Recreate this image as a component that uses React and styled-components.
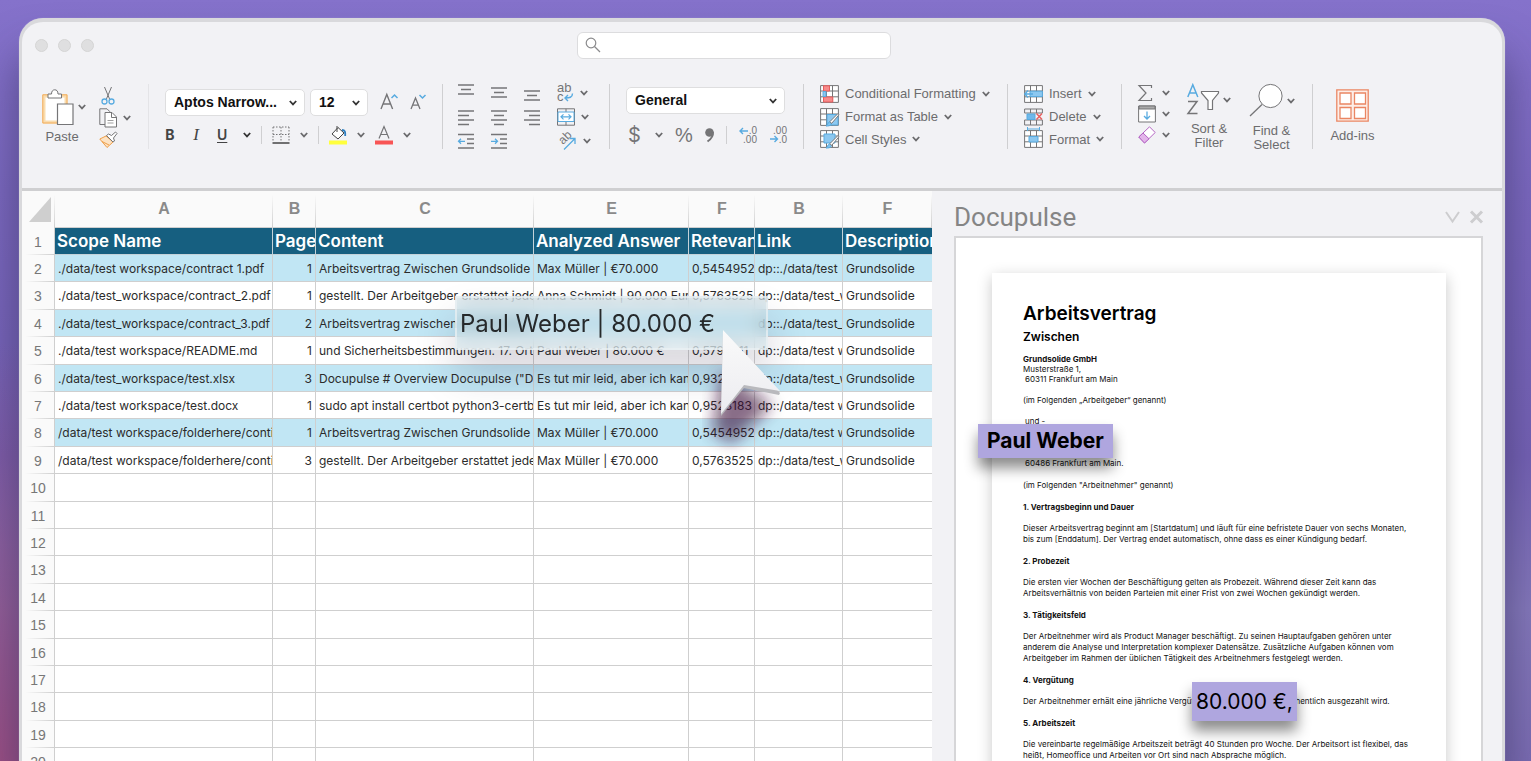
import React from "react";
import styled, { createGlobalStyle } from "styled-components";

const GlobalStyle = createGlobalStyle`
  * { box-sizing: border-box; }
  body { margin: 0; font-family: Inter, "Liberation Sans", sans-serif; color: #222; }
  button { border: 0; background: none; padding: 0; margin: 0; font: inherit; color: inherit; }
  h1, h2, h3, p { margin: 0; }
`;

/* ---------- window ---------- */

const Desktop = styled.div`
  height: 100vh;
  padding: 18px 26px 0 19px;
  display: flex;
  overflow: hidden;
  background:
    radial-gradient(ellipse 400px 420px at 0 100%, #9c4f84 0, rgba(140, 80, 145, 0) 100%),
    linear-gradient(180deg, #8572cb 0, #7b68bf 25%, #7461b4 60%, #8478ba 80%, #7b6cb2 100%);
`;

const Window = styled.main`
  flex: 1;
  min-width: 0;
  display: flex;
  flex-direction: column;
  overflow: hidden;
  background: #f2f2f5;
  border: 3px solid #d9d9dc;
  border-top-width: 4px;
  border-bottom: 0;
  border-radius: 24px 24px 0 0;
  box-shadow: 0 0 1px #b4a8e0, 0 36px 44px rgba(50, 45, 90, 0.6);
`;

const TitleBar = styled.header`
  flex: none;
  height: 46px;
  display: grid;
  grid-template-columns: 555fr 314px 611fr;
  align-items: center;
`;

const Lights = styled.div`
  display: flex;
  gap: 10px;
  padding-left: 13px;
`;

const Light = styled.button`
  width: 13px;
  height: 13px;
  border-radius: 50%;
  background: #dfdfe0;
  border: 1px solid #d4d4d4;
`;

const SearchBox = styled.label`
  display: flex;
  align-items: center;
  gap: 6px;
  height: 27px;
  padding: 0 7px;
  background: #fff;
  border: 1px solid #dcdcde;
  border-radius: 6px;
`;

const SearchInput = styled.input`
  flex: 1;
  min-width: 0;
  border: 0;
  outline: 0;
  background: none;
  font-size: 13px;
`;

/* ---------- ribbon ---------- */

const Ribbon = styled.section`
  flex: none;
  height: 123px;
  padding-top: 16px;
  display: flex;
  border-bottom: 3px solid #cfcfd1;
  font-family: "Liberation Sans", Arial, sans-serif;
  font-size: 13px;
  color: #6c6c6e;
`;

const Group = styled.div`
  flex: none;
  width: ${(p) => p.$width}px;
  height: 65px;
  padding-left: ${(p) => p.$pad || 16}px;
  display: flex;
  flex-direction: ${(p) => (p.$stack ? "column" : "row")};
  gap: ${(p) => p.$gap || 0}px;
  border-right: ${(p) => (p.$last ? 0 : 1)}px solid ${(p) => (p.$faint ? "#e4e4e7" : "#cfcfd1")};
`;

const ToolStack = styled.div`
  display: flex;
  flex-direction: column;
  gap: ${(p) => p.$gap || 3}px;
  padding-top: ${(p) => p.$top || 0}px;
`;

const ToolRow = styled.div`
  display: flex;
  align-items: center;
  height: ${(p) => p.$height || 20}px;
  gap: ${(p) => p.$gap || 10}px;
`;

const ToolButton = styled.button`
  display: flex;
  align-items: center;
  justify-content: flex-start;
  gap: ${(p) => p.$gap || 6}px;
  height: ${(p) => p.$height || 20}px;
  white-space: nowrap;
`;

const GlyphButton = styled.button`
  width: ${(p) => p.$width || 10}px;
  text-align: center;
  line-height: 20px;
  font-size: ${(p) => p.$size || 14}px;
  font-family: ${(p) => p.$font || "Inter"}, sans-serif;
  font-weight: ${(p) => p.$weight || 400};
  font-style: ${(p) => (p.$italic ? "italic" : "normal")};
  text-decoration: ${(p) => (p.$underline ? "underline" : "none")};
  text-underline-offset: 2px;
  color: ${(p) => p.$color || "#444"};
`;

const BigButton = styled.button`
  display: flex;
  flex-direction: column;
  align-items: center;
  width: ${(p) => p.$width}px;
  padding-top: ${(p) => p.$top || 0}px;
  line-height: 14px;
`;

const BigIcon = styled.span`
  display: flex;
  align-items: center;
  gap: 4px;
  align-self: stretch;
  justify-content: ${(p) => p.$align || "flex-end"};
  margin-bottom: ${(p) => p.$below || 5}px;
`;

const Rule = styled.span`
  width: 1px;
  height: 18px;
  background: #cfcfd1;
`;

const SelectBox = styled.div`
  position: relative;
  width: ${(p) => p.$width}px;
  svg {
    position: absolute;
    right: 8px;
    top: 11px;
    pointer-events: none;
  }
`;

const Select = styled.select`
  appearance: none;
  width: 100%;
  height: 27px;
  padding: 0 20px 0 8px;
  background: #fff;
  border: 1px solid #dededf;
  border-radius: 5px;
  font: bold 14px "Liberation Sans", Arial, sans-serif;
  color: #111;
`;

const AlignGrid = styled.div`
  display: grid;
  grid-template-columns: repeat(3, 16px) auto;
  grid-auto-rows: 18px;
  gap: 6px 17px;
  align-items: center;
`;

const Svg = styled.svg`
  flex: none;
  display: block;
  overflow: visible;
`;

const Icon = ({ w = 18, h = 18, children, color = "#757577", width = 1 }) => (
  <Svg width={w} height={h} viewBox={`0 0 ${w} ${h}`} fill="none" stroke={color} strokeWidth={width} aria-hidden="true">
    {children}
  </Svg>
);

const Chevron = ({ dark }) => (
  <Icon w={8} h={6} color={dark ? "#333" : "#6b6b6d"} width={1.8}>
    <path d="M.8 1 4 4.400 7.200 1" />
  </Icon>
);

const BLUE = "#58abe0";

const Lines = ({ rows, y = 0, gap = 4.5 }) => (
  <Icon w={16} h={18} width={1.3}>
    {rows.map(([a, b], i) => (
      <path key={i} d={`M${a} ${y + 1 + i * gap}H${b}`} />
    ))}
  </Icon>
);

const PasteIcon = () => (
  <Icon w={32} h={36}>
    <path d="M2 7H24V33H2z" fill="#fff" stroke="#f9dcae" strokeWidth="3" />
    <path d="M.8 5.800H25V34H.8z" stroke="#f2ab57" strokeWidth="1" />
    <path d="M6 9V5h3.500C9.500 2 11 .8 12.800 .8S16 2 16 5h3.500v4z" fill="#fff" />
    <path d="M15.500 15H31V35.500H15.500z" fill="#fff" strokeWidth="1.200" />
  </Icon>
);

const CutIcon = () => (
  <Icon w={18} h={20}>
    <path d="M5.500 1 11 14M12.500 1 7 14" />
    <circle cx="5.500" cy="15.500" r="2.500" stroke={BLUE} strokeWidth="1.300" />
    <circle cx="12.500" cy="15.500" r="2.500" stroke={BLUE} strokeWidth="1.300" />
  </Icon>
);

const CopyIcon = () => (
  <Icon w={18} h={20}>
    <path d="M6 16.500H.8V.8H8l3 3" />
    <path d="M6 4.500h7l4.500 4.500v10H6z" fill="#fff" />
    <path d="M12.500 4.500v5h5" />
    <path d="M8.500 12.500h6M8.500 15h6" strokeWidth=".7" />
  </Icon>
);

const BrushIcon = () => (
  <Icon w={18} h={18}>
    <path d="M.8 8 7 5l7 6-6 5.500z" fill="#fde3c4" stroke="#ee9f4a" />
    <path d="M3 10.500 10 14" stroke="#ee9f4a" />
    <path d="M7.500 4.500 9.500 3l3 1.500 4-3.500 1.500 1.500L14.500 7l1 3L14 11z" fill="#fff" />
  </Icon>
);

const FontSize = ({ up }) => (
  <Icon w={18} h={20}>
    {up ? <path d="M1 17 6.800 2.500 12.600 17M3 12h7.600" strokeWidth="1.400" /> : <path d="M1 17 5.500 6 10 17M2.500 13.200h6" strokeWidth="1.300" />}
    {up ? <path d="M11.500 6 14.500 3l3 3" stroke={BLUE} strokeWidth="1.500" /> : <path d="M9.500 3 12.500 6l3-3" stroke={BLUE} strokeWidth="1.500" />}
  </Icon>
);

const BordersIcon = () => (
  <Icon>
    <path d="M1 1H17M1 1V16M17 1V16M9 1V16M1 8.500H17" strokeDasharray="1.500 1.500" />
    <path d="M.5 17H17.500" stroke="#444" strokeWidth="1.600" />
  </Icon>
);

const FillIcon = () => (
  <Icon h={20}>
    <path d="M3 9 9 2.500 15 8l-6 6z" fill="#fff" stroke="#444" />
    <path d="M8 1v6" stroke="#444" />
    <path d="M13 5c3 0 3.500 2 3.200 6" stroke="#2f7fc0" strokeWidth="1.800" />
    <path d="M0 15.500H18V19.500H0z" fill="#ffff3c" stroke="none" />
  </Icon>
);

const FontColorIcon = () => (
  <Icon h={20}>
    <path d="M4 13.500 9 1.500 14 13.500M5.700 9.500h6.600" strokeWidth="1.200" />
    <path d="M0 15.500H18V19.500H0z" fill="#f85555" stroke="none" />
  </Icon>
);

const WrapIcon = () => (
  <Icon>
    <text x="0" y="8" fontSize="13" fill="#757577" stroke="none">ab</text>
    <text x="0" y="17" fontSize="13" fill="#757577" stroke="none">c</text>
    <path d="M15.500 9.500c0 4-3 4.500-7.500 4.500M11 11l-3 3 3 3" stroke={BLUE} strokeWidth="1.400" />
  </Icon>
);

const MergeIcon = () => (
  <Icon>
    <path d="M.5 .8H17.500V17.200H.5zM9 .8V4M9 14V17.200" />
    <path d="M1 4H17V13.500H1z" fill="#fff" stroke={BLUE} />
    <path d="M4 8.800H14M6.500 6.300 4 8.800l2.500 2.500M11.500 6.300 14 8.800l-2.500 2.500" stroke={BLUE} strokeWidth="1.200" />
  </Icon>
);

const OrientIcon = () => (
  <Icon>
    <text x="0" y="0" fontSize="12" fill="#757577" stroke="none" transform="translate(6 13) rotate(-45)">ab</text>
    <path d="M7 17.500 18 6.500M12.500 6.500H18V12" stroke={BLUE} strokeWidth="1.300" />
  </Icon>
);

const IndentIcon = ({ right }) => (
  <Icon w={16}>
    <path d="M0 2.500H16M9 7H16M9 11.500H16M0 16H16" strokeWidth="1.300" />
    <path d={right ? "M0 9.300H6.500M4 6.800 6.500 9.300 4 11.800" : "M7 9.300H.5M3 6.800 .5 9.300 3 11.800"} stroke={BLUE} strokeWidth="1.300" />
  </Icon>
);

const DecimalIcon = ({ more }) => (
  <Icon>
    <text x="18" y="8" textAnchor="end" fontSize="10" fill="#757577" stroke="none">{more ? ".00" : ".0"}</text>
    <text x="18" y="17" textAnchor="end" fontSize="10" fill="#757577" stroke="none">{more ? ".0" : ".00"}</text>
    <path d={more ? "M1 13H8.500M5.500 10 8.500 13l-3 3" : "M9 5H1M4 2 1 5l3 3"} stroke={BLUE} strokeWidth="1.400" />
  </Icon>
);

const CommaIcon = () => (
  <Icon w={9} h={16}>
    <circle cx="4.500" cy="5.500" r="4.300" fill="#757577" stroke="none" />
    <path d="M7.800 5c.6 4-1.600 7-5.300 9.500" strokeWidth="2" />
  </Icon>
);

const CellGrid = ({ children }) => (
  <Icon w={19}>
    <path d="M.6 .6H18.400V17.400H.6z" fill="#fff" />
    <path d="M6.500 .6V17.400M12.500 .6V17.400M.6 6H18.400M.6 11.800H18.400" />
    {children}
  </Icon>
);

const Pen = () => (
  <g>
    <path d="M6 18c2-1 1-3 3.500-4l2 2C10.500 18 8 18 6 18z" fill="#7cc3ee" stroke={BLUE} />
    <path d="M10 13.500 18 5.500c1 0 1 1.500 0 2.500l-6.500 7.500z" fill="#fff" />
  </g>
);

const ConditionalIcon = () => (
  <CellGrid>
    <path d="M3.500 .8H9.500V6H3.500zM3.500 12H12.800V17H3.500z" fill="#f78b8b" stroke="#e85d5d" />
    <path d="M3 6.500H6V11.500H3z" fill="#8cc8f0" stroke={BLUE} />
  </CellGrid>
);

const TableFormatIcon = () => (
  <CellGrid>
    <path d="M7 6.500H18V17H7z" fill="#8cc8f0" stroke={BLUE} />
    <Pen />
  </CellGrid>
);

const CellStyleIcon = () => (
  <CellGrid>
    <path d="M4 4H15V13H4z" fill="#8cc8f0" stroke={BLUE} />
    <Pen />
  </CellGrid>
);

const InsertIcon = () => (
  <CellGrid>
    <path d="M6 6.200H18.400V11.600H6z" fill="#8cc8f0" stroke={BLUE} />
    <path d="M9 9H1M4 5.500 .8 9 4 12.500" stroke={BLUE} strokeWidth="1.400" />
  </CellGrid>
);

const DeleteIcon = () => (
  <Icon w={19}>
    <path d="M.6 5V1H18.400V5M6.500 1V5M12.500 1V5M.6 12V17H18.400V12M6.500 12V17M12.500 12V17M.6 5H18.400M.6 12H18.400" />
    <path d="M3 6H11V11.500H3z" fill="#6fb8ea" stroke={BLUE} />
    <path d="M12.500 5.500 18 11.500M18 5.500 12.500 11.500" stroke="#e85d5d" strokeWidth="1.400" />
  </Icon>
);

const FormatIcon = () => (
  <CellGrid>
    <path d="M5 6.500H14V12H5z" fill="#8cc8f0" stroke={BLUE} />
    <path d="M3.500 -1H15.500M3.500 -3V1M15.500 -3V1" stroke={BLUE} />
  </CellGrid>
);

const SumIcon = () => (
  <Icon>
    <path d="M13.500 4V1.500H1L8 9 1 16.500H13.500V14" strokeWidth="1.200" />
  </Icon>
);

const FillDownIcon = () => (
  <Icon>
    <path d="M.6 1H17.400V17H.6z" fill="#fff" />
    <path d="M1 1H17V4H1z" fill="#aaa" />
    <path d="M9 6.500V14M6 11l3 3 3-3" stroke={BLUE} strokeWidth="1.300" />
  </Icon>
);

const ClearIcon = () => (
  <Icon color="#b566c4">
    <path d="M.8 11 11.500 .8 17.200 6.500 6.500 17z" fill="#fff" />
    <path d="M.8 11 5 7l6 5.800L6.500 17z" fill="#e3b5ea" />
  </Icon>
);

const SortIcon = () => (
  <Icon w={32} h={31}>
    <path d="M.8 13 5.800 .8 10.800 13M2.500 9h6.600" stroke={BLUE} strokeWidth="1.500" />
    <path d="M1 17.500H10L1 29.500H10.500" strokeWidth="1.500" />
    <path d="M14.500 7.500H31.500V9L25.500 16.500V25.500H21V16.500L14.500 9z" fill="#fff" strokeWidth="1.200" />
  </Icon>
);

const FindIcon = () => (
  <Icon w={34} h={33}>
    <circle cx="21.500" cy="12" r="11.600" fill="#fff" />
    <path d="M13 20.500 1 32" strokeWidth="1.300" />
  </Icon>
);

const AddinsIcon = () => (
  <Icon w={33} h={33} color="#ea8663" width={1.3}>
    <path d="M.8 .8H32.200V32.200H.8z" fill="#fdeee8" />
    <path d="M4 4H15V15H4zM18.500 4H29.500V15H18.500zM4 18.500H15V29.500H4zM18.500 18.500H29.500V29.500H18.500z" fill="#fff" />
  </Icon>
);

const Labelled = ({ icon, text }) => (
  <ToolButton>
    {icon}
    {text}
    <Chevron />
  </ToolButton>
);

const Dropdown = ({ label, value, width }) => (
  <SelectBox $width={width}>
    <Select aria-label={label} defaultValue={value}>
      <option>{value}</option>
    </Select>
    <Chevron dark />
  </SelectBox>
);

const IconButton = ({ label, children, chevron, gap }) => (
  <ToolButton aria-label={label} $gap={gap} $height={18}>
    {children}
    {chevron && <Chevron />}
  </ToolButton>
);

const FULL = [0, 16];

function RibbonBar() {
  return (
    <Ribbon aria-label="Home">
      <Group $width={127} $gap={13} $faint>
        <BigButton $width={48} $top={5}>
          <BigIcon>
            <PasteIcon />
            <Chevron />
          </BigIcon>
          Paste
        </BigButton>
        <ToolStack $gap={4} $top={3}>
          <IconButton label="Cut"><CutIcon /></IconButton>
          <IconButton label="Copy" chevron><CopyIcon /></IconButton>
          <IconButton label="Format painter"><BrushIcon /></IconButton>
        </ToolStack>
      </Group>

      <Group $width={294} $stack $gap={5}>
        <ToolRow $height={36} $gap={12}>
          <ToolRow $gap={5}>
            <Dropdown label="Font" value="Aptos Narrow..." width={140} />
            <Dropdown label="Font size" value="12" width={58} />
          </ToolRow>
          <IconButton label="Increase font size"><FontSize up /></IconButton>
          <IconButton label="Decrease font size"><FontSize /></IconButton>
        </ToolRow>
        <ToolRow>
          <ToolRow $gap={16}>
            <GlyphButton $weight={700}>B</GlyphButton>
            <GlyphButton $font="Liberation Serif" $size={17} $italic>I</GlyphButton>
            <GlyphButton $weight={600} $underline>U</GlyphButton>
            <Chevron dark />
          </ToolRow>
          <Rule />
          <IconButton label="Borders" chevron gap={10}><BordersIcon /></IconButton>
          <Rule />
          <IconButton label="Fill color" chevron gap={10}><FillIcon /></IconButton>
          <IconButton label="Font color" chevron gap={10}><FontColorIcon /></IconButton>
        </ToolRow>
      </Group>

      <Group $width={167} $pad={15}>
        <AlignGrid>
          <IconButton label="Top align"><Lines rows={[FULL, [3, 13], FULL]} /></IconButton>
          <IconButton label="Middle align"><Lines rows={[FULL, [3, 13], FULL]} y={3} /></IconButton>
          <IconButton label="Bottom align"><Lines rows={[FULL, [3, 13], FULL]} y={6} /></IconButton>
          <IconButton label="Wrap text" chevron gap={5}><WrapIcon /></IconButton>
          <IconButton label="Align left"><Lines rows={[FULL, [0, 11], FULL, [0, 11]]} y={2} /></IconButton>
          <IconButton label="Center"><Lines rows={[FULL, [3, 13], FULL, [3, 13]]} y={2} /></IconButton>
          <IconButton label="Align right"><Lines rows={[FULL, [5, 16], FULL, [5, 16]]} y={2} /></IconButton>
          <IconButton label="Merge" chevron><MergeIcon /></IconButton>
          <IconButton label="Decrease indent"><IndentIcon /></IconButton>
          <IconButton label="Increase indent"><IndentIcon right /></IconButton>
          <span />
          <IconButton label="Orientation" chevron gap={8}><OrientIcon /></IconButton>
        </AlignGrid>
      </Group>

      <Group $width={194} $stack $gap={9}>
        <ToolRow $height={32}>
          <Dropdown label="Number format" value="General" width={159} />
        </ToolRow>
        <ToolRow $gap={12}>
          <GlyphButton $width={17} $size={20} $color="#757577">$</GlyphButton>
          <Chevron />
          <GlyphButton $width={18} $size={20} $color="#757577" $font="Liberation Sans">%</GlyphButton>
          <IconButton label="Comma style"><CommaIcon /></IconButton>
          <Rule />
          <IconButton label="Increase decimal"><DecimalIcon /></IconButton>
          <IconButton label="Decrease decimal"><DecimalIcon more /></IconButton>
        </ToolRow>
      </Group>

      <Group $width={204}>
        <ToolStack>
          <Labelled icon={<ConditionalIcon />} text="Conditional Formatting" />
          <Labelled icon={<TableFormatIcon />} text="Format as Table" />
          <Labelled icon={<CellStyleIcon />} text="Cell Styles" />
        </ToolStack>
      </Group>

      <Group $width={114}>
        <ToolStack>
          <Labelled icon={<InsertIcon />} text="Insert" />
          <Labelled icon={<DeleteIcon />} text="Delete" />
          <Labelled icon={<FormatIcon />} text="Format" />
        </ToolStack>
      </Group>

      <Group $width={191} $gap={17}>
        <ToolStack>
          <IconButton label="AutoSum" chevron><SumIcon /></IconButton>
          <IconButton label="Fill" chevron><FillDownIcon /></IconButton>
          <IconButton label="Clear" chevron><ClearIcon /></IconButton>
        </ToolStack>
        <BigButton $width={44}>
          <BigIcon $below={7}>
            <SortIcon />
            <Chevron />
          </BigIcon>
          Sort &amp;<br />Filter
        </BigButton>
        <BigButton $width={47}>
          <BigIcon $below={7}>
            <FindIcon />
            <Chevron />
          </BigIcon>
          Find &amp;<br />Select
        </BigButton>
      </Group>

      <Group $width={80} $pad={17} $last>
        <BigButton $width={45} $top={5}>
          <BigIcon $align="center" $below={7}>
            <AddinsIcon />
          </BigIcon>
          Add-ins
        </BigButton>
      </Group>
    </Ribbon>
  );
}

/* ---------- sheet ---------- */

const Workspace = styled.div`
  flex: 1;
  min-height: 0;
  display: grid;
  grid-template-columns: minmax(0, 910fr) minmax(0, 570fr);
  grid-template-rows: minmax(0, 1fr);
`;

const SheetArea = styled.section`
  position: relative;
  overflow: hidden;
  background: #fafafa;
`;

const Sheet = styled.table`
  width: 100%;
  table-layout: fixed;
  border-collapse: separate;
  border-spacing: 0;
  th, td {
    padding: 0;
    overflow: hidden;
    white-space: nowrap;
  }
`;

const Letters = styled.tr`
  height: 37px;
`;

const Letter = styled.th`
  font: bold 16px "Liberation Sans", Arial, sans-serif;
  color: #8a8a8a;
  background: linear-gradient(180deg, #fafafa 10%, #cfcfcf) right / 1px 100% no-repeat;
  border-bottom: 1px solid #cfcfcf;
`;

const Corner = styled.td`
  background: linear-gradient(180deg, #fafafa 10%, #cfcfcf) right / 1px 100% no-repeat;
  svg { margin: 0 0 0 7px; }
`;

const Row = styled.tr`
  height: 27px;
  background: ${(p) => (p.$head ? "#165f80" : p.$tint ? "#c1e6f4" : "#fff")};
  &:nth-child(5n + 3), &:nth-child(5n) { height: 28px; }
`;

const RowNumber = styled.th`
  font: 14px "Liberation Sans", Arial, sans-serif;
  color: #777;
  border-right: 1px solid #cfcfcf;
  background: linear-gradient(90deg, #fafafa 10%, #cfcfcf) bottom / 100% 1px no-repeat #fafafa;
`;

const Cell = styled.td`
  font-size: 12px;
  text-align: ${(p) => (p.$right ? "right" : "left")};
  border-right: 1px solid #cfcfcf;
  border-bottom: 1px solid #cfcfcf;
  && { padding: 0 ${(p) => (p.$right ? 3 : 0)}px 0 3px; }
  color: #2b2b2b;
  &:last-child { border-right: 0; }
`;

const HeadCell = styled.th`
  font-size: 17px;
  font-weight: 600;
  line-height: 20px;
  text-align: left;
  color: #fff;
  border-right: 1px solid #c4d2d9;
  border-bottom: 1px solid #c4d2d9;
  && { padding-left: 2px; }
  &:last-child { border-right: 0; }
`;

const COLUMNS = [
  ["A", 218, "Scope Name"],
  ["B", 43, "Page"],
  ["C", 218, "Content"],
  ["E", 155, "Analyzed Answer"],
  ["F", 66, "Retevance"],
  ["B", 88, "Link"],
  ["F", null, "Description"],
];

const DATA = [
  ["./data/test workspace/contract 1.pdf", 1, "Arbeitsvertrag Zwischen Grundsolide", "Max Müller | €70.000", "0,5454952", "dp::./data/test"],
  ["./data/test_workspace/contract_2.pdf", 1, "gestellt. Der Arbeitgeber erstattet jeden", "Anna Schmidt | 90.000 Euro", "0,5763525", "dp::/data/test_workspace"],
  ["./data/test_workspace/contract_3.pdf", 2, "Arbeitsvertrag zwischen Grundsolide", "", "", "dp::./data/test_workspace"],
  ["./data/test workspace/README.md", 1, "und Sicherheitsbestimmungen. 17. Ort", "Paul Weber | 80.000 €", "0,5793511", "dp::/data/test workspace"],
  ["./data/test_workspace/test.xlsx", 3, "Docupulse # Overview Docupulse (\"Doc", "Es tut mir leid, aber ich kann", "0,9324417", "dp::/data/test_workspace"],
  ["./data/test workspace/test.docx", 1, "sudo apt install certbot python3-certbot", "Es tut mir leid, aber ich kann", "0,9528183", "dp::/data/test workspace"],
  ["/data/test workspace/folderhere/continue", 1, "Arbeitsvertrag Zwischen Grundsolide", "Max Müller | €70.000", "0,5454952", "dp::/data/test workspace"],
  ["/data/test workspace/folderhere/continue", 3, "gestellt. Der Arbeitgeber erstattet jeden", "Max Müller | €70.000", "0,5763525", "dp::/data/test_workspace"],
];

const EMPTY_ROWS = Array.from({ length: 12 }, (_, i) => i + 10);

const LiftedCell = styled.div`
  position: absolute;
  left: 433px;
  top: 105px;
  width: 313px;
  height: 54px;
  padding-left: 3px;
  line-height: 52px;
  font-size: 24px;
  white-space: nowrap;
  color: #26292b;
  background: rgba(190, 212, 222, 0.4);
  border: 2px solid rgba(235, 241, 243, 0.7);
  backdrop-filter: blur(8px);
  box-shadow: 0 24px 40px rgba(40, 30, 60, 0.18);
`;

const Pointer = styled.svg`
  position: absolute;
  left: 680px;
  top: 130px;
  pointer-events: none;
`;

function Spreadsheet() {
  return (
    <SheetArea>
      <Sheet>
        <colgroup>
          <col width="33" />
          {COLUMNS.map(([, width], i) => (
            <col key={i} width={width || undefined} />
          ))}
        </colgroup>
        <thead>
          <Letters>
            <Corner>
              <Svg width="22" height="25" aria-hidden="true">
                <path d="M22 0V25H0z" fill="#cfcfcf" />
              </Svg>
            </Corner>
            {COLUMNS.map(([letter], i) => (
              <Letter key={i} scope="col">{letter}</Letter>
            ))}
          </Letters>
        </thead>
        <tbody>
          <Row $head>
            <RowNumber scope="row">1</RowNumber>
            {COLUMNS.map(([, , title]) => (
              <HeadCell key={title}>{title}</HeadCell>
            ))}
          </Row>
          {DATA.map((row, i) => (
            <Row key={i} $tint={i % 2 === 0}>
              <RowNumber scope="row">{i + 2}</RowNumber>
              {row.map((value, c) => (
                <Cell key={c} $right={c === 1}>{value}</Cell>
              ))}
              <Cell>Grundsolide</Cell>
            </Row>
          ))}
          {EMPTY_ROWS.map((n) => (
            <Row key={n}>
              <RowNumber scope="row">{n}</RowNumber>
              {COLUMNS.map((_, c) => (
                <Cell key={c} />
              ))}
            </Row>
          ))}
        </tbody>
      </Sheet>
      <LiftedCell>Paul Weber | 80.000 €</LiftedCell>
      <Pointer width="100" height="140" viewBox="0 0 100 140" aria-hidden="true">
        <defs>
          <filter id="soft" x="-60%" y="-60%" width="220%" height="220%">
            <feGaussianBlur stdDeviation="8" />
          </filter>
          <linearGradient id="face" x1="0" y1="0" x2="0" y2="1">
            <stop offset="0" stopColor="#fafafa" />
            <stop offset="1" stopColor="#ececf0" />
          </linearGradient>
        </defs>
        <path d="M20 50 70 84 54 100 30 122 10 110z" fill="#3b1038" opacity=".6" filter="url(#soft)" />
        <path d="M21 11 78 72 77 74 42 67 19 95z" fill="#b9b9bd" />
        <path d="M21 9 78 70 42 64 19 93z" fill="url(#face)" />
      </Pointer>
    </SheetArea>
  );
}

/* ---------- document pane ---------- */

const Pane = styled.aside`
  display: flex;
  flex-direction: column;
  padding: 7px 19px 0 22px;
`;

const PaneHeader = styled.div`
  flex: none;
  display: flex;
  align-items: center;
  gap: 10px;
  height: 38px;
`;

const PaneTitle = styled.h2`
  flex: 1;
  font: 400 26px Roboto, sans-serif;
  color: #858585;
`;

const Viewer = styled.div`
  flex: 1;
  min-height: 0;
  padding: 35px 35px 0 36px;
  overflow: hidden;
  background: #fff;
  border: 2px solid #d6d6d8;
  border-bottom: 0;
`;

const Paper = styled.article`
  position: relative;
  height: 660px;
  padding: 29px 31px;
  background: #fff;
  box-shadow: 0 4px 14px rgba(0, 0, 0, 0.22);
  font-size: 8px;
  line-height: 11px;
  color: #111;
`;

const DocTitle = styled.h1`
  font-size: 19px;
  font-weight: 600;
  line-height: 24px;
  color: #000;
`;

const DocSubtitle = styled.h2`
  margin: 4px 0 10px;
  font-size: 12px;
  font-weight: 600;
  line-height: 14px;
  color: #000;
`;

const Line = styled.p`
  padding-left: ${(p) => (p.$inset ? 2 : 0)}px;
  margin-bottom: ${(p) => p.$after || 0}px;
  line-height: 10px;
  font-weight: ${(p) => (p.$strong ? 700 : 400)};
`;

const Clause = styled.section`
  margin-bottom: 11px;
  white-space: pre-line;
`;

const ClauseTitle = styled.h3`
  margin-bottom: 10px;
  font-size: 8px;
  font-weight: 700;
`;

const Mark = styled.mark`
  position: absolute;
  left: ${(p) => p.$left}px;
  top: ${(p) => p.$top}px;
  padding: 0 ${(p) => p.$pad}px;
  line-height: ${(p) => p.$height}px;
  font-size: 21px;
  font-weight: ${(p) => p.$weight};
  white-space: nowrap;
  color: #000;
  background: #afa6df;
  box-shadow: 0 10px 14px rgba(0, 0, 0, 0.45);
`;

const CLAUSES = [
  ["1. Vertragsbeginn und Dauer", "Dieser Arbeitsvertrag beginnt am [Startdatum] und läuft für eine befristete Dauer von sechs Monaten,\nbis zum [Enddatum]. Der Vertrag endet automatisch, ohne dass es einer Kündigung bedarf."],
  ["2. Probezeit", "Die ersten vier Wochen der Beschäftigung gelten als Probezeit. Während dieser Zeit kann das\nArbeitsverhältnis von beiden Parteien mit einer Frist von zwei Wochen gekündigt werden."],
  ["3. Tätigkeitsfeld", "Der Arbeitnehmer wird als Product Manager beschäftigt. Zu seinen Hauptaufgaben gehören unter\nanderem die Analyse und Interpretation komplexer Datensätze. Zusätzliche Aufgaben können vom\nArbeitgeber im Rahmen der üblichen Tätigkeit des Arbeitnehmers festgelegt werden."],
  ["4. Vergütung", "Der Arbeitnehmer erhält eine jährliche Vergütung von 80.000 €, die wöchentlich ausgezahlt wird."],
  ["5. Arbeitszeit", "Die vereinbarte regelmäßige Arbeitszeit beträgt 40 Stunden pro Woche. Der Arbeitsort ist flexibel, das\nheißt, Homeoffice und Arbeiten vor Ort sind nach Absprache möglich."],
];

function DocumentPane() {
  return (
    <Pane>
      <PaneHeader>
        <PaneTitle>Docupulse</PaneTitle>
        <button aria-label="Collapse">
          <Icon w={15} h={12} color="#cdcdcf" width={2}>
            <path d="M1 1 7.500 10.500 14 1" />
          </Icon>
        </button>
        <button aria-label="Close">
          <Icon w={13} h={12} color="#cdcdcf" width={3}>
            <path d="M1 .5 12 11.500M12 .5 1 11.500" />
          </Icon>
        </button>
      </PaneHeader>
      <Viewer>
        <Paper>
          <DocTitle>Arbeitsvertrag</DocTitle>
          <DocSubtitle>Zwischen</DocSubtitle>
          <Line $strong>Grundsolide GmbH</Line>
          <Line>Musterstraße 1,</Line>
          <Line $inset $after={11}>60311 Frankfurt am Main</Line>
          <Line $after={11}>(im Folgenden „Arbeitgeber“ genannt)</Line>
          <Line $inset $after={32}>und -</Line>
          <Line $inset $after={12}>60486 Frankfurt am Main.</Line>
          <Line $after={12}>(im Folgenden "Arbeitnehmer" genannt)</Line>
          {CLAUSES.map(([title, text]) => (
            <Clause key={title}>
              <ClauseTitle>{title}</ClauseTitle>
              <p>{text}</p>
            </Clause>
          ))}
          <Mark $left={-14} $top={151} $pad={9} $height={34} $weight={700}>Paul Weber</Mark>
          <Mark $left={200} $top={409} $pad={4} $height={39} $weight={400}>80.000 €,</Mark>
        </Paper>
      </Viewer>
    </Pane>
  );
}

export default function App() {
  return (
    <>
      <GlobalStyle />
      <Desktop>
        <Window>
          <TitleBar>
            <Lights>
              <Light aria-label="Close window" />
              <Light aria-label="Minimize window" />
              <Light aria-label="Zoom window" />
            </Lights>
            <SearchBox>
              <Icon w={16} h={16} color="#8a8a8c" width={1.2}>
                <circle cx="6" cy="6" r="4.800" />
                <path d="M9.500 9.500 15 15" />
              </Icon>
              <SearchInput type="search" aria-label="Search" />
            </SearchBox>
          </TitleBar>
          <RibbonBar />
          <Workspace>
            <Spreadsheet />
            <DocumentPane />
          </Workspace>
        </Window>
      </Desktop>
    </>
  );
}
